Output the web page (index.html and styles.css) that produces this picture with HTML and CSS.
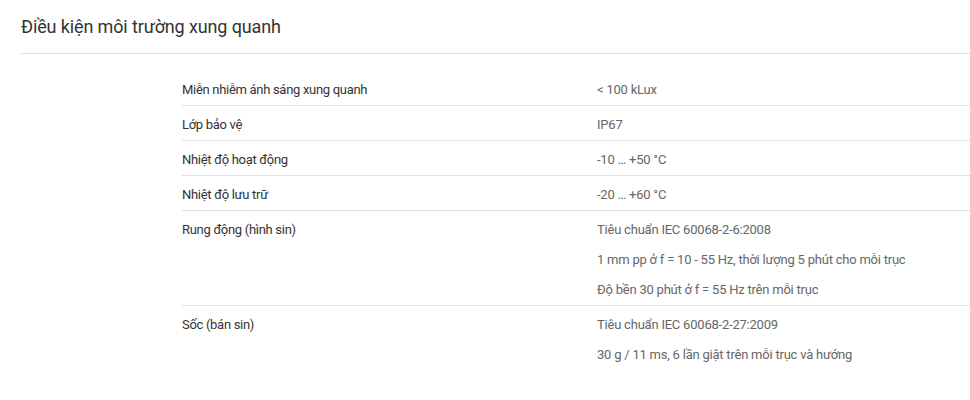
FILE: index.html
```html
<!DOCTYPE html>
<html lang="vi">
<head>
<meta charset="utf-8">
<link rel="stylesheet" href="styles.css">
</head>
<body>
<section class="panel">
  <h2 class="title">Điều kiện môi trường xung quanh</h2>
  <div class="table">
    <div class="row">
      <div class="label">Miễn nhiễm ánh sáng xung quanh</div>
      <div class="values"><p>&lt; 100 kLux</p></div>
    </div>
    <div class="row">
      <div class="label">Lớp bảo vệ</div>
      <div class="values"><p>IP67</p></div>
    </div>
    <div class="row">
      <div class="label">Nhiệt độ hoạt động</div>
      <div class="values"><p>-10 … +50 °C</p></div>
    </div>
    <div class="row">
      <div class="label">Nhiệt độ lưu trữ</div>
      <div class="values"><p>-20 … +60 °C</p></div>
    </div>
    <div class="row">
      <div class="label">Rung động (hình sin)</div>
      <div class="values">
        <p>Tiêu chuẩn IEC 60068-2-6:2008</p>
        <p>1 mm pp ở f = 10 - 55 Hz, thời lượng 5 phút cho mỗi trục</p>
        <p>Độ bền 30 phút ở f = 55 Hz trên mỗi trục</p>
      </div>
    </div>
    <div class="row last">
      <div class="label">Sốc (bán sin)</div>
      <div class="values">
        <p>Tiêu chuẩn IEC 60068-2-27:2009</p>
        <p>30 g / 11 ms, 6 lần giật trên mỗi trục và hướng</p>
      </div>
    </div>
  </div>
</section>
</body>
</html>
```

FILE: styles.css
```css
html, body {
  margin: 0;
  padding: 0;
  background: #fff;
}
body {
  font-family: Roboto, "Liberation Sans", sans-serif;
}
.panel {
  padding-left: 21px;
}
.title {
  margin: 0;
  font-size: 18px;
  font-weight: 400;
  color: #333;
  letter-spacing: -0.13px;
  line-height: 24px;
  padding-top: 15px;
  padding-bottom: 14px;
  border-bottom: 1px solid #e0e0e0;
}
.table {
  margin-left: 161px;
  padding-top: 17px;
}
.row {
  display: grid;
  grid-template-columns: 415px 1fr;
  padding: 9px 0 5px;
  border-bottom: 1px solid #e0e0e0;
}
.row.last {
  border-bottom: none;
}
.label {
  font-size: 13px;
  line-height: 20px;
  color: #333;
  letter-spacing: -0.3px;
}
.values {
  display: flex;
  flex-direction: column;
  gap: 10px;
}
.values p {
  margin: 0;
  font-size: 13px;
  line-height: 20px;
  color: #666;
  letter-spacing: -0.22px;
}
```
